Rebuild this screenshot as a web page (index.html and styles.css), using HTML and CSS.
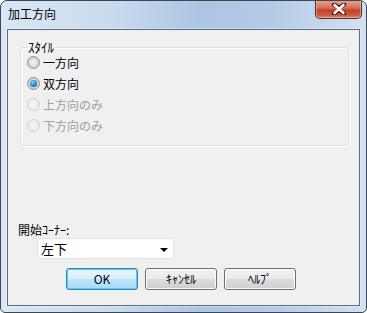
FILE: index.html
```html
<!DOCTYPE html>
<html lang="ja">
<head>
<meta charset="utf-8">
<link rel="stylesheet" href="styles.css">
</head>
<body>
<div class="window">
  <div class="titlebar">
    <span class="title">加工方向</span>
    <div class="close">
      <svg width="16" height="12" viewBox="0 0 16 12">
        <path d="M3 1.5 L8 5 L13 1.5 M3 10.5 L8 7 L13 10.5" fill="none" stroke="#3a1a14" stroke-width="4.2" stroke-linecap="round"/>
        <path d="M3.5 2 L12.5 10 M12.5 2 L3.5 10" fill="none" stroke="#ffffff" stroke-width="2.6" stroke-linecap="round"/>
      </svg>
    </div>
  </div>
  <div class="client">
    <fieldset class="group">
      <legend class="legend">ｽﾀｲﾙ</legend>
      <div class="opt"><span class="radio"></span><span>一方向</span></div>
      <div class="opt"><span class="radio checked"></span><span>双方向</span></div>
      <div class="opt disabled"><span class="radio"></span><span>上方向のみ</span></div>
      <div class="opt disabled"><span class="radio"></span><span>下方向のみ</span></div>
    </fieldset>
    <div class="label">開始ｺｰﾅｰ:</div>
    <div class="select"><span>左下</span><span class="arrow"></span></div>
    <div class="buttons">
      <div class="btn default">OK</div>
      <div class="btn">ｷｬﾝｾﾙ</div>
      <div class="btn">ﾍﾙﾌﾟ</div>
    </div>
  </div>
</div>
</body>
</html>
```
FILE: styles.css
```css
html, body {
  margin: 0;
  padding: 0;
  background: #ffffff;
}
body {
  font-family: "Noto Sans CJK JP", "Noto Sans", sans-serif;
  font-size: 12px;
  color: #000;
}
.window {
  position: relative;
  width: 367px;
  height: 313px;
  box-sizing: border-box;
  border: 1px solid #3b4656;
  border-radius: 7px 7px 5px 5px;
  background: linear-gradient(90deg, #dae7f4 0%, #c9dbee 30%, #abc6e2 55%, #b4cce6 75%, #d2e1f1 100%);
  padding: 0 6px 6px 6px;
  display: flex;
  flex-direction: column;
  overflow: hidden;
}
.titlebar {
  height: 28px;
  display: flex;
  align-items: center;
}
.title {
  padding-left: 1px;
  line-height: 16px;
  margin-top: -3px;
}
.close {
  position: absolute;
  top: -1px;
  right: 4px;
  width: 47px;
  height: 19px;
  box-sizing: border-box;
  border: 1px solid #5a2b25;
  border-top: none;
  border-radius: 0 0 5px 5px;
  background: linear-gradient(180deg, #e8a493 0%, #d66e57 45%, #c4412a 55%, #cf5a3f 85%, #e08a6e 100%);
  box-shadow: inset 0 0 0 1px rgba(255,220,210,0.45);
  display: flex;
  align-items: center;
  justify-content: center;
}
.client {
  flex: 1;
  border: 1px solid #5b6b80;
  background: #f0f0f0;
  box-shadow: 0 0 0 1px rgba(255,255,255,0.35);
  display: flex;
  flex-direction: column;
  align-items: flex-start;
}
.group {
  margin: 9px 0 0 12px;
  padding: 0 0 0 6px;
  width: 329px;
  height: 107px;
  box-sizing: border-box;
  border: 1px solid #d5dfe5;
  border-radius: 3px;
  box-shadow: inset 1px 1px 0 #ffffff, 1px 1px 0 #ffffff;
}
.legend {
  padding: 0 1px;
  line-height: 16px;
  font-size: 13px;
}
.opt {
  display: flex;
  align-items: center;
  gap: 3px;
  height: 21px;
  line-height: 16px;
}
.opt:first-of-type {
  margin-top: -3px;
}
.opt.disabled {
  color: #a0a0a0;
}
.radio {
  width: 13px;
  height: 13px;
  box-sizing: border-box;
  border-radius: 50%;
  border: 1px solid #8e8f8f;
  background: radial-gradient(circle at 50% 50%, #f4f4f4 0%, #dcdcdc 50%, #c9c9c9 70%, #f8f8f8 72%);
  position: relative;
}
.radio.checked::after {
  content: "";
  position: absolute;
  left: 2px;
  top: 2px;
  width: 7px;
  height: 7px;
  border-radius: 50%;
  background: radial-gradient(circle at 40% 35%, #8fd2ff 0%, #1d80c8 55%, #0f4f86 100%);
}
.opt.disabled .radio {
  border-color: #cacaca;
  background: radial-gradient(circle at 50% 50%, #f7f7f7 0%, #ececec 60%, #f8f8f8 72%);
}
.label {
  margin: 76px 0 0 10px;
  line-height: 16px;
}
.select {
  margin: 0 0 0 29px;
  width: 137px;
  height: 21px;
  box-sizing: border-box;
  border: 1px solid #dfe3e8;
  border-radius: 2px;
  background: #ffffff;
  display: flex;
  align-items: center;
  justify-content: space-between;
  padding: 0 5px 0 3px;
  font-size: 13px;
}
.arrow {
  width: 0;
  height: 0;
  border-left: 4px solid transparent;
  border-right: 4px solid transparent;
  border-top: 4px solid #000;
  margin-top: 2px;
}
.buttons {
  margin: 9px 0 0 58px;
  display: flex;
  gap: 7px;
}
.btn {
  width: 72px;
  height: 22px;
  box-sizing: border-box;
  border: 1px solid #707070;
  border-radius: 3px;
  background: linear-gradient(180deg, #f2f2f2 0%, #ebebeb 50%, #dddddd 50%, #cfcfcf 100%);
  box-shadow: inset 0 0 0 1px #fbfbfb;
  display: flex;
  align-items: center;
  justify-content: center;
  line-height: 16px;
}
.btn.default {
  border-color: #3c7fb1;
  box-shadow: inset 0 0 0 1px #48d3fb;
  background: linear-gradient(180deg, #eaf6fd 0%, #d9f0fc 50%, #bee6fd 50%, #a7d9f5 100%);
}
```
